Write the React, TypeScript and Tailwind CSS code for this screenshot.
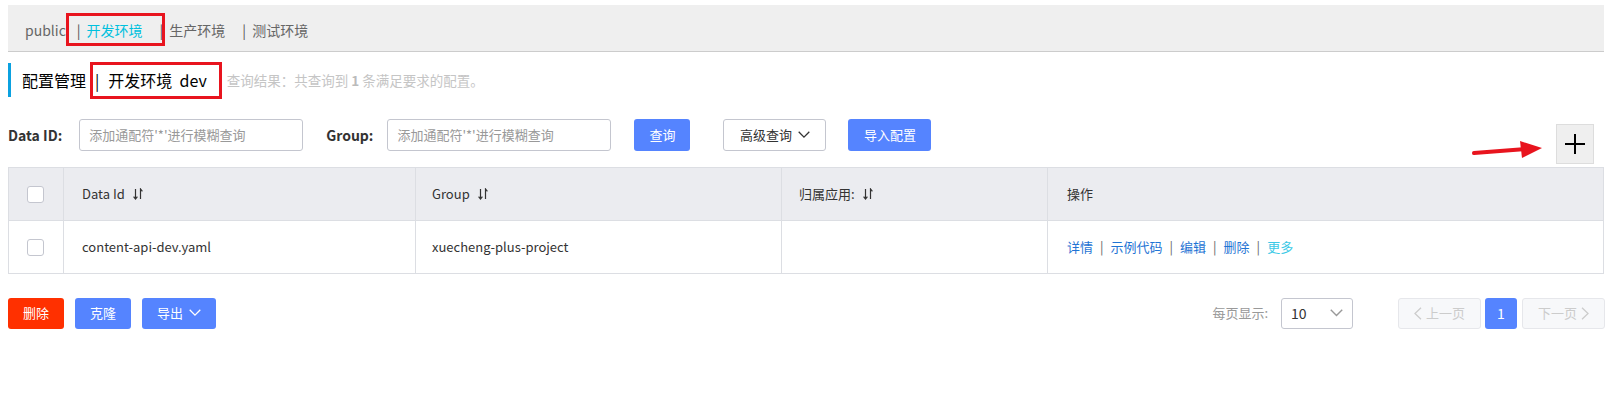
import React from "react";

const SortIcon = () => (
  <svg width="10" height="12" viewBox="0 0 10 12" className="ml-[8px] inline-block" fill="none" stroke="#333" strokeWidth="1.2">
    <path d="M2.5 1V11M0.6 8.6L2.5 11L4.4 8.6" />
    <path d="M7.5 11V1L9.4 3.4" />
  </svg>
);

const Chevron = ({ color = "#333", size = 12 }: { color?: string; size?: number }) => (
  <svg width={size} height={size * 0.6} viewBox="0 0 12 7" fill="none" stroke={color} strokeWidth="1.3">
    <polyline points="0.7,0.7 6,6 11.3,0.7" />
  </svg>
);

const Checkbox = () => (
  <span className="inline-block w-[17px] h-[17px] rounded-[3px] border border-[#c4c6cf] bg-white" />
);

const tabs = ["开发环境", "生产环境", "测试环境"];
const actions = ["详情", "示例代码", "编辑", "删除"];

export default function App() {
  return (
    <div
      className="relative w-[1617px] h-[403px] bg-white text-[#333] overflow-hidden"
      style={{ fontFamily: '"Noto Sans CJK SC", "Noto Sans", sans-serif' }}
    >
      {/* namespace tabs */}
      <div className="pt-[5px] pl-2 pr-[13px]">
        <div className="h-[47px] bg-[#efefef] border-b border-[#cccccc] flex items-center pt-[4px] pl-[17px] text-[14px] text-[#666]">
          <span className="mr-[11px]">public</span>
          {tabs.map((t, i) => (
            <span key={t} className="flex items-center">
              <span className="mr-[6px] text-[#555]">|</span>
              <span className={i === 0 ? "text-[#00c1de] mr-[17px]" : "mr-[17px] text-[#666]"}>{t}</span>
            </span>
          ))}
        </div>
      </div>

      {/* title */}
      <div className="mt-[11px] ml-2 h-[34px] border-l-[3px] border-[#0ba1e0] flex items-center pl-[11px]">
        <span className="text-[16px] text-[#000]">配置管理</span>
        <span className="text-[16px] text-[#000] ml-[9px]">|</span>
        <span className="text-[16px] text-[#000] ml-[9px]">开发环境&nbsp;&nbsp;dev</span>
        <span className="text-[13.5px] text-[#c5c5c5] ml-[20px]">
          查询结果：共查询到 <b className="text-[#bbb]">1</b> 条满足要求的配置。
        </span>
      </div>

      {/* search row */}
      <div className="mt-[22px] flex items-start pl-2 pr-[23px]">
        <div className="flex items-center h-[32px]">
          <span className="text-[14px] font-bold text-[#333]">Data ID:</span>
          <div className="ml-[17px] w-[224px] h-[32px] border border-[#c4c6cf] rounded-[3px] flex items-center pl-[9px] text-[13px] text-[#999]">
            添加通配符'*'进行模糊查询
          </div>
        </div>
        <div className="flex items-center h-[32px] ml-[23px]">
          <span className="text-[14px] font-bold text-[#333]">Group:</span>
          <div className="ml-[14px] w-[224px] h-[32px] border border-[#c4c6cf] rounded-[3px] flex items-center pl-[9px] text-[13px] text-[#999]">
            添加通配符'*'进行模糊查询
          </div>
        </div>
        <button className="ml-[23px] w-[56px] h-[32px] rounded-[3px] bg-[#5584ff] text-white text-[13px]">查询</button>
        <button className="ml-[33px] w-[103px] h-[32px] rounded-[3px] border border-[#c4c6cf] bg-white text-[13px] text-[#333] flex items-center justify-center gap-[6px]">
          高级查询 <Chevron />
        </button>
        <button className="ml-[22px] w-[83px] h-[32px] rounded-[3px] bg-[#5584ff] text-white text-[13px]">导入配置</button>
        <button className="ml-auto mt-[5px] w-[38px] h-[40px] bg-[#efefef] border border-[#dddddd] flex items-center justify-center">
          <svg width="24" height="24" viewBox="0 0 24 24" stroke="#000" strokeWidth="2">
            <path d="M12 2V22M2 12H22" />
          </svg>
        </button>
      </div>

      {/* table */}
      <div className="mt-[3px] mx-2 w-[1596px] border border-[#dcdee3] text-[13px] text-[#333]">
        <div className="grid grid-cols-[55px_352px_366px_266px_1fr] h-[53px] bg-[#ebecf0] border-b border-[#dcdee3]">
          <div className="flex items-center pl-[18px] border-r border-[#dcdee3]"><Checkbox /></div>
          <div className="flex items-center pl-[18px] border-r border-[#dcdee3]">Data Id<SortIcon /></div>
          <div className="flex items-center pl-[16px] border-r border-[#dcdee3]">Group<SortIcon /></div>
          <div className="flex items-center pl-[17px] border-r border-[#dcdee3]">归属应用:<SortIcon /></div>
          <div className="flex items-center pl-[19px]">操作</div>
        </div>
        <div className="grid grid-cols-[55px_352px_366px_266px_1fr] h-[52px]">
          <div className="flex items-center pl-[18px] border-r border-[#dcdee3]"><Checkbox /></div>
          <div className="flex items-center pl-[18px] border-r border-[#dcdee3]">content-api-dev.yaml</div>
          <div className="flex items-center pl-[16px] border-r border-[#dcdee3]">xuecheng-plus-project</div>
          <div className="border-r border-[#dcdee3]" />
          <div className="flex items-center pl-[19px]">
            {actions.map((a) => (
              <span key={a} className="flex items-center">
                <span className="text-[#1f74d4]">{a}</span>
                <span className="mx-[7px] text-[#666]">|</span>
              </span>
            ))}
            <span className="text-[#3cc9e6]">更多</span>
          </div>
        </div>
      </div>

      {/* bottom row */}
      <div className="mt-[23px] flex items-center pl-2 pr-[12px] h-[32px]">
        <button className="w-[56px] h-[31px] rounded-[3px] bg-[#ff3000] text-white text-[13px]">删除</button>
        <button className="ml-[11px] w-[56px] h-[31px] rounded-[3px] bg-[#5584ff] text-white text-[13px]">克隆</button>
        <button className="ml-[11px] w-[74px] h-[31px] rounded-[3px] bg-[#5584ff] text-white text-[13px] flex items-center justify-center gap-[6px]">
          导出 <Chevron color="#fff" />
        </button>
        <span className="ml-auto text-[13px] text-[#999]">每页显示:</span>
        <div className="ml-[13px] w-[72px] h-[31px] border border-[#c4c6cf] rounded-[3px] flex items-center justify-between pl-[9px] pr-[9px]">
          <span className="text-[14px] text-[#333]">10</span>
          <Chevron color="#999" size={13} />
        </div>
        <button className="ml-[45px] w-[83px] h-[31px] rounded-[3px] border border-[#e6e7eb] bg-[#f7f8fa] text-[13px] text-[#ccc] flex items-center justify-center gap-[4px]">
          <svg width="8" height="13" viewBox="0 0 8 13" fill="none" stroke="#ccc" strokeWidth="1.3"><polyline points="7,0.7 1,6.5 7,12.3" /></svg>
          上一页
        </button>
        <button className="ml-[4px] w-[32px] h-[31px] rounded-[3px] bg-[#5584ff] text-white text-[14px]">1</button>
        <button className="ml-[5px] w-[83px] h-[31px] rounded-[3px] border border-[#e6e7eb] bg-[#f7f8fa] text-[13px] text-[#ccc] flex items-center justify-center gap-[4px]">
          下一页
          <svg width="8" height="13" viewBox="0 0 8 13" fill="none" stroke="#ccc" strokeWidth="1.3"><polyline points="1,0.7 7,6.5 1,12.3" /></svg>
        </button>
      </div>

      {/* annotations */}
      <div className="absolute left-[66px] top-[13px] w-[99px] h-[33px] border-[3px] border-[#e8141e]" />
      <div className="absolute left-[90px] top-[62px] w-[132px] h-[37px] border-[3px] border-[#e8141e]" />
      <svg className="absolute left-[1470px] top-[138px]" width="76" height="24" viewBox="0 0 76 24">
        <path d="M4 15L56 11" stroke="#e8141e" strokeWidth="4" strokeLinecap="round" />
        <path d="M50 3L72 10L52 20Z" fill="#e8141e" />
      </svg>
    </div>
  );
}
